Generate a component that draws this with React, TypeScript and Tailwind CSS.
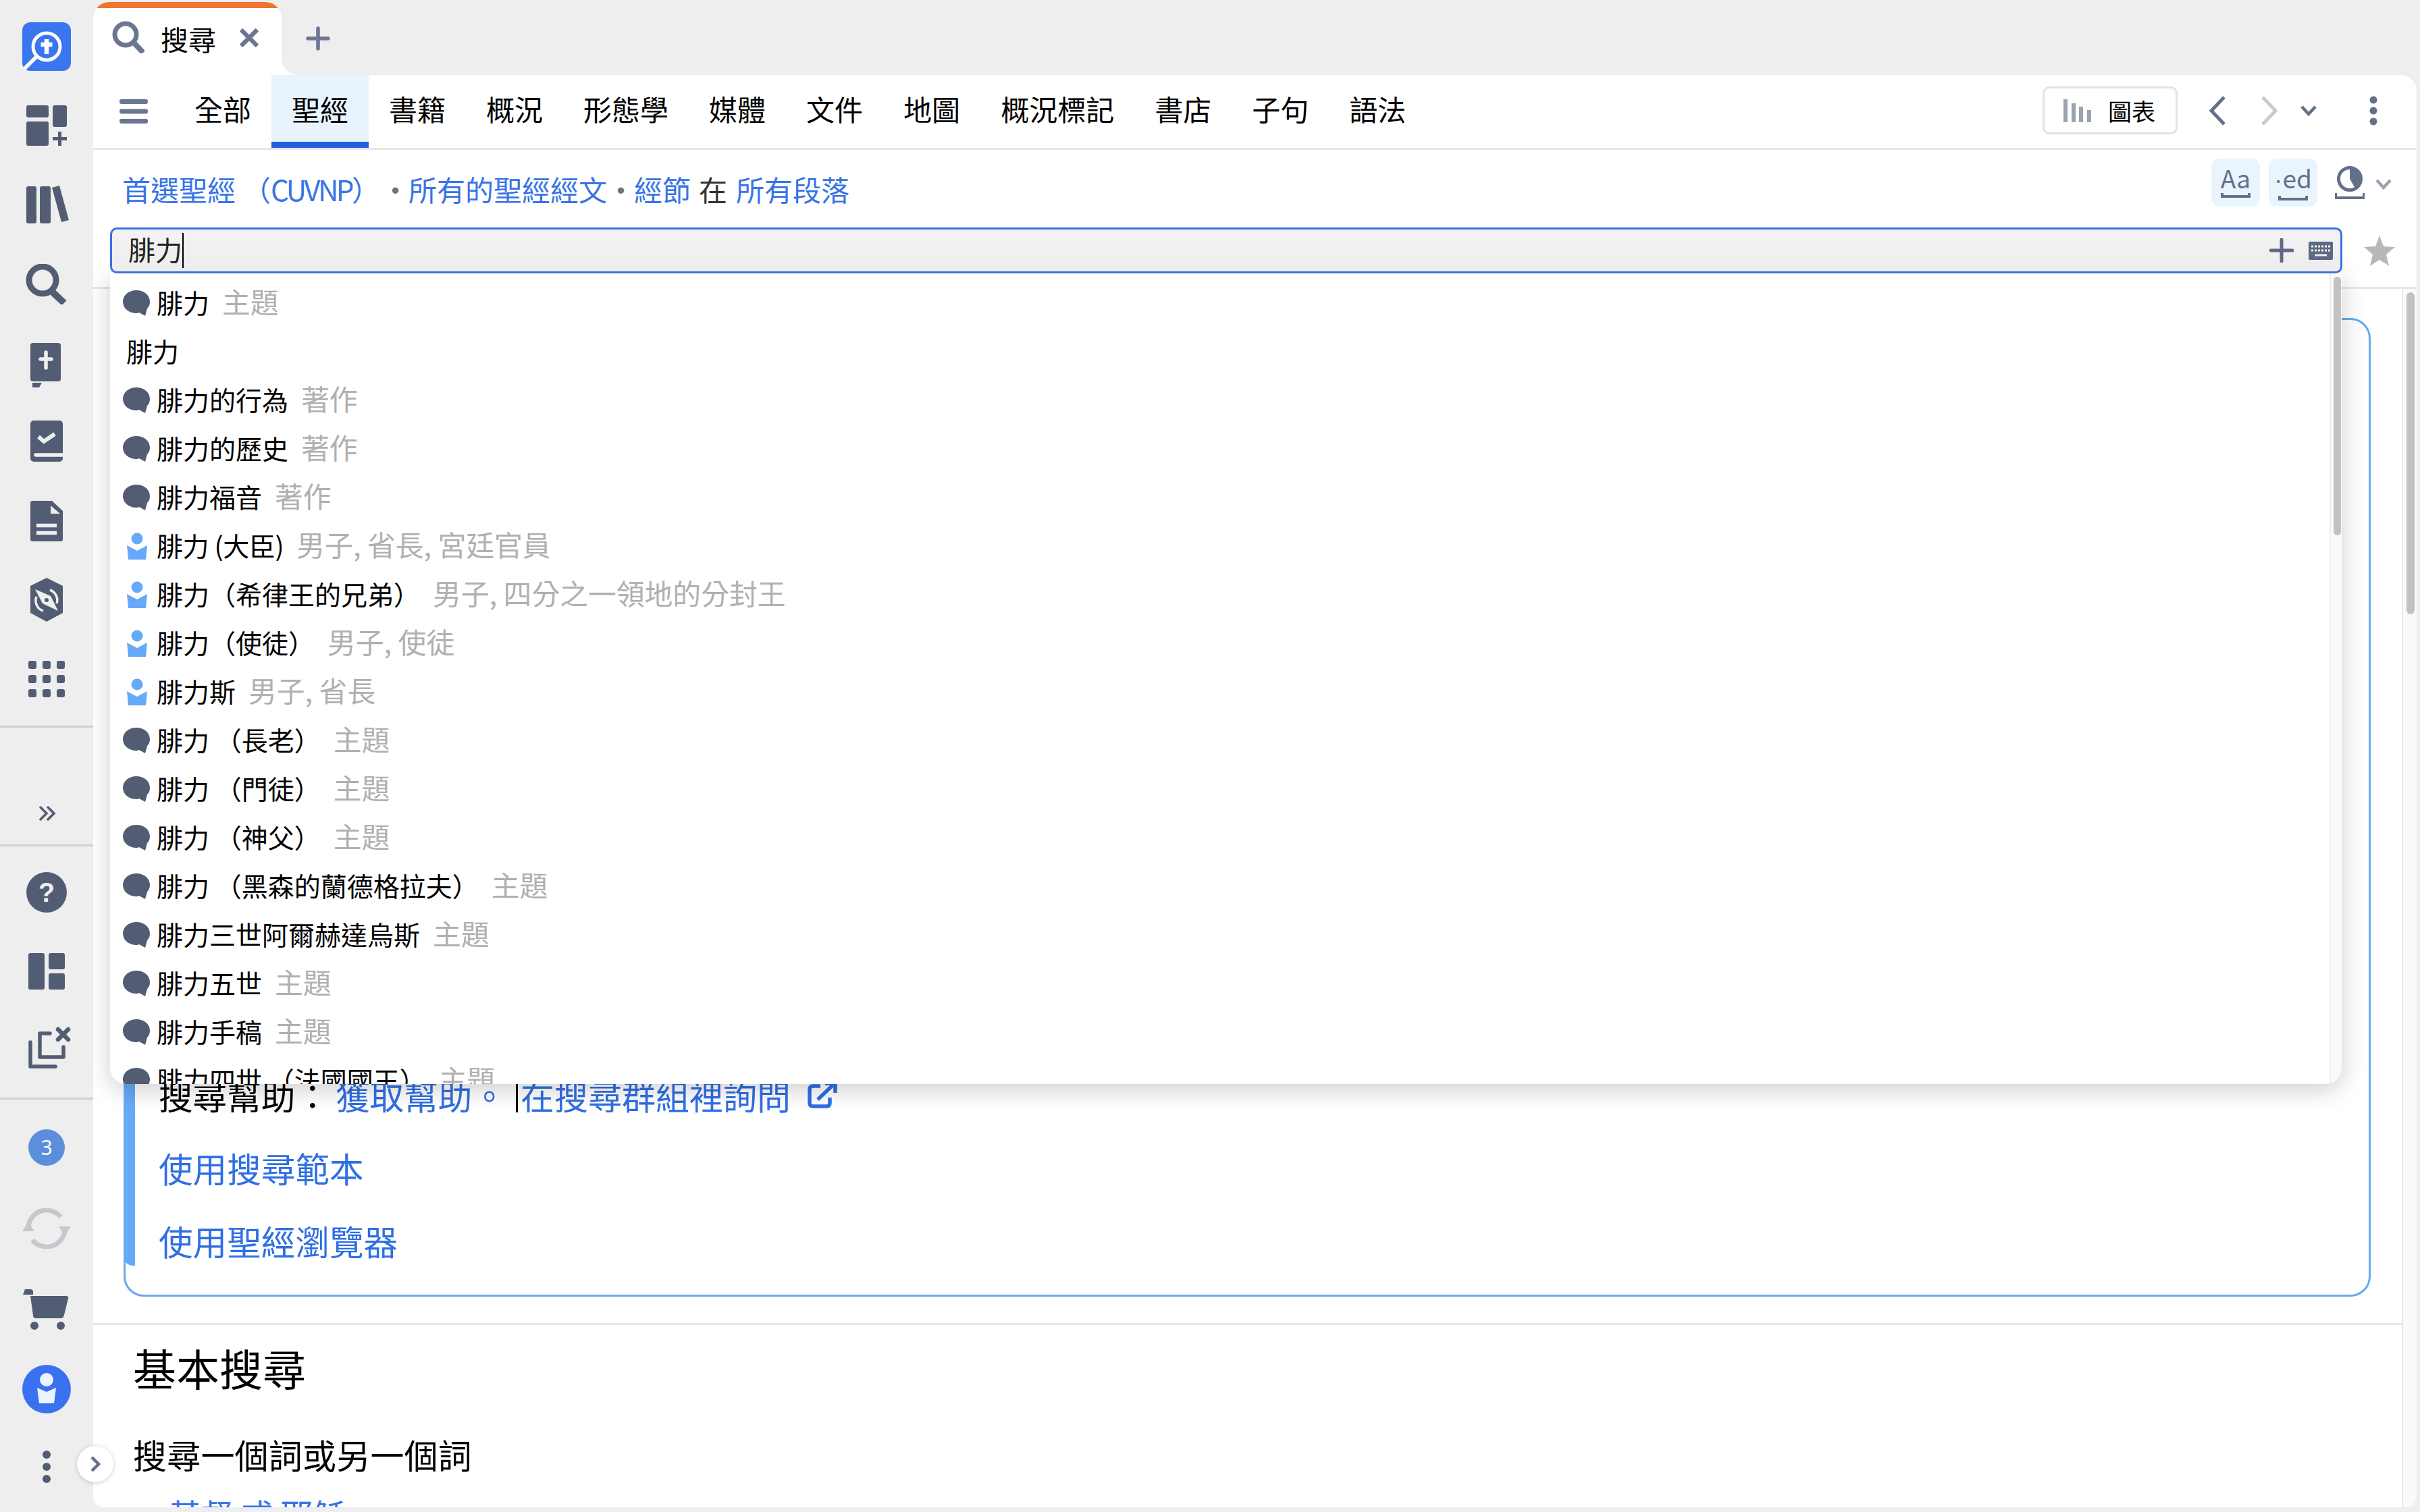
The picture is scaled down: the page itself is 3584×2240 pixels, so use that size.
import React from "react";

const DARK = "#525d73";
const BG = "#eeeeee";

function Bubble() {
  return (
    <svg width="40" height="38" viewBox="0 0 40 38" className="shrink-0">
      <path d="M20 0C31 0 40 7 40 17C40 22 38 25 36 27L33 38L24 33C22 34 21 34 20 34C9 34 0 27 0 17C0 7 9 0 20 0Z" fill={DARK} />
    </svg>
  );
}

function Person() {
  return (
    <svg width="40" height="40" viewBox="0 0 40 40" className="shrink-0">
      <circle cx="21" cy="9" r="8.5" fill="#66a9f8" />
      <path d="M6 19L21 27L36 19L34 40H8Z" fill="#66a9f8" />
    </svg>
  );
}

const rows: [string, string, string][] = [
  ["b", "腓力", "主題"],
  ["n", "腓力", ""],
  ["b", "腓力的行為", "著作"],
  ["b", "腓力的歷史", "著作"],
  ["b", "腓力福音", "著作"],
  ["p", "腓力 (大臣)", "男子, 省長, 宮廷官員"],
  ["p", "腓力（希律王的兄弟）", "男子, 四分之一領地的分封王"],
  ["p", "腓力（使徒）", "男子, 使徒"],
  ["p", "腓力斯", "男子, 省長"],
  ["b", "腓力 （長老）", "主題"],
  ["b", "腓力 （門徒）", "主題"],
  ["b", "腓力 （神父）", "主題"],
  ["b", "腓力 （黑森的蘭德格拉夫）", "主題"],
  ["b", "腓力三世阿爾赫達烏斯", "主題"],
  ["b", "腓力五世", "主題"],
  ["b", "腓力手稿", "主題"],
  ["b", "腓力四世 （法國國王）", "主題"],
];

const tabs = ["全部", "聖經", "書籍", "概況", "形態學", "媒體", "文件", "地圖", "概況標記", "書店", "子句", "語法"];

function Rail() {
  return (
    <aside className="w-[138px] shrink-0 flex flex-col items-stretch">
      <svg width="72" height="72" viewBox="0 0 72 72" className="mt-[33px] ml-[33px]">
        <rect width="72" height="72" rx="12" fill="#3b75f0" />
        <circle cx="36" cy="36" r="20" fill="none" stroke="#fff" strokeWidth="5" />
        <path d="M22 50L3 69" stroke="#fff" strokeWidth="5.5" />
        <path d="M36 25V47M27.5 33H44.5" stroke="#fff" strokeWidth="6.5" />
      </svg>
      <svg width="72" height="60" viewBox="0 0 72 60" className="mt-[51px] ml-[33px]" fill={DARK}>
        <rect x="6" y="0" width="33" height="18" rx="3" />
        <rect x="6" y="24" width="33" height="36" rx="3" />
        <rect x="45" y="0" width="21" height="32" rx="3" />
        <path d="M55.5 39V60M45 49.5H66" stroke={DARK} strokeWidth="5" />
      </svg>
      <svg width="72" height="56" viewBox="0 0 72 56" className="mt-[59px] ml-[33px]" fill={DARK}>
        <rect x="6" y="1" width="15" height="55" rx="3" />
        <rect x="26" y="1" width="16" height="55" rx="3" />
        <path d="M44 3L55 0L69 51L58 54Z" />
      </svg>
      <svg width="72" height="60" viewBox="0 0 72 60" className="mt-[60px] ml-[33px]" fill="none" stroke={DARK}>
        <circle cx="30" cy="24" r="20" strokeWidth="9" />
        <path d="M43 40L62 58" strokeWidth="10" />
      </svg>
      <svg width="72" height="66" viewBox="0 0 72 66" className="mt-[57px] ml-[33px]">
        <rect x="12" y="0" width="45" height="57" rx="4" fill={DARK} />
        <path d="M15 59H29L25 66H15Z" fill={DARK} />
        <path d="M35 14V37M27 24H43" stroke={BG} strokeWidth="5.5" strokeLinecap="round" />
      </svg>
      <svg width="72" height="61" viewBox="0 0 72 61" className="mt-[49px] ml-[33px]">
        <rect x="12" y="0" width="48" height="61" rx="5" fill={DARK} />
        <path d="M24 24L32 31L48 20" fill="none" stroke={BG} strokeWidth="6" />
        <path d="M20 51H60" stroke={BG} strokeWidth="5.5" strokeLinecap="round" />
      </svg>
      <svg width="72" height="60" viewBox="0 0 72 60" className="mt-[58px] ml-[33px]">
        <path d="M14 0H44L60 15V57Q60 60 57 60H15Q12 60 12 57V2Z" fill={DARK} />
        <path d="M42 7V19H56Z" fill={BG} />
        <path d="M21 36.5H51M21 47.5H51" stroke={BG} strokeWidth="5.5" />
      </svg>
      <svg width="72" height="65" viewBox="0 0 72 65" className="mt-[54px] ml-[33px]">
        <path d="M36 0L60 12V52L36 65L12 52V12Z" fill={DARK} strokeLinejoin="round" />
        <path d="M19 17L42 27L53 49L30 38Z" fill={BG} />
        <path d="M41 18A16 16 0 0 1 51 38M31 49A16 16 0 0 1 21 28" fill="none" stroke={BG} strokeWidth="3.5" />
        <circle cx="36" cy="33" r="3" fill={DARK} />
      </svg>
      <svg width="72" height="54" viewBox="0 0 72 54" className="mt-[58px] ml-[33px]" fill={DARK}>
        <rect x="9" y="0" width="12" height="12" rx="3" />
        <rect x="30" y="0" width="12" height="12" rx="3" />
        <rect x="51" y="0" width="12" height="12" rx="3" />
        <rect x="9" y="21" width="12" height="12" rx="3" />
        <rect x="30" y="21" width="12" height="12" rx="3" />
        <rect x="51" y="21" width="12" height="12" rx="3" />
        <rect x="9" y="42" width="12" height="12" rx="3" />
        <rect x="30" y="42" width="12" height="12" rx="3" />
        <rect x="51" y="42" width="12" height="12" rx="3" />
      </svg>
      <div className="mt-[42px] h-[3px] bg-[#cfcfcf]" />
      <svg width="72" height="22" viewBox="0 0 72 22" className="mt-[116px] ml-[33px]" fill="none" stroke={DARK} strokeWidth="3.5" strokeLinecap="round">
        <path d="M27 2L36 11L27 20M38 2L47 11L38 20" />
      </svg>
      <div className="mt-[35px] h-[3px] bg-[#cfcfcf]" />
      <div className="mt-[38px] ml-[39px] w-[60px] h-[60px] rounded-full bg-[#525d73] text-[#eeeeee] text-[40px] font-bold leading-[60px] text-center font-['Liberation_Sans',sans-serif]">?</div>
      <svg width="72" height="54" viewBox="0 0 72 54" className="mt-[60px] ml-[33px]" fill={DARK}>
        <rect x="9" y="0" width="24" height="54" rx="3" />
        <rect x="39" y="0" width="24" height="24" rx="3" />
        <rect x="39" y="30" width="24" height="24" rx="3" />
      </svg>
      <svg width="72" height="62" viewBox="0 0 72 62" className="mt-[55px] ml-[33px]" fill="none" stroke={DARK} strokeLinecap="round" strokeLinejoin="round">
        <path d="M41 10H26V45H61V30" strokeWidth="5.5" />
        <path d="M12 23V59H49" strokeWidth="5.5" />
        <path d="M53 4L68 19M68 4L53 19" strokeWidth="6.5" />
      </svg>
      <div className="mt-[43px] h-[3px] bg-[#cfcfcf]" />
      <div className="mt-[44px] ml-[42px] w-[54px] h-[54px] rounded-full bg-[#5b8fdc] text-white text-[30px] leading-[54px] text-center font-['Noto_Sans',sans-serif]">3</div>
      <svg width="72" height="60" viewBox="0 0 72 60" className="mt-[63px] ml-[33px]" fill="none">
        <path d="M9 32A27 27 0 0 1 57 13M63 28A27 27 0 0 1 15 47" stroke="#c5c8cd" strokeWidth="7" />
        <path d="M0 34L9 20L18 34Z M54 27L72 27L63 41Z" fill="#c5c8cd" />
      </svg>
      <svg width="72" height="60" viewBox="0 0 72 60" className="mt-[60px] ml-[33px]" fill={DARK}>
        <path d="M3 0H11Q15 0 15 4V8H-0Z" transform="translate(1 0)" />
        <path d="M12 10H65Q69 10 68 14L62 38Q61 43 57 43H20Q16 43 16 39Z" />
        <circle cx="18" cy="54" r="6" />
        <circle cx="57" cy="54" r="6" />
      </svg>
      <svg width="72" height="72" viewBox="0 0 72 72" className="mt-[52px] ml-[33px]">
        <circle cx="36" cy="36" r="36" fill="#3a71f0" />
        <circle cx="36" cy="22" r="10" fill="#eaf4fd" />
        <path d="M22 34L36 40L50 34L47 57H25Z" fill="#eaf4fd" />
      </svg>
      <svg width="72" height="48" viewBox="0 0 72 48" className="mt-[55px] ml-[33px]" fill={DARK}>
        <circle cx="36" cy="6" r="6" />
        <circle cx="36" cy="24" r="6" />
        <circle cx="36" cy="42" r="6" />
      </svg>
    </aside>
  );
}

function Bracket() {
  return <path d="M2 0V5H42V0" fill="none" stroke="#64708a" strokeWidth="4" />;
}

function SearchDropdown() {
  return (
    <div className="absolute z-10 left-0 right-[1px] top-[66px] h-[1203px] bg-white rounded-b-[24px] shadow-[0_8px_36px_rgba(0,0,0,0.2)] overflow-hidden flex">
      <div className="flex-1 pt-[10px] overflow-hidden">
        {rows.map(([kind, main, sub], i) => (
          <div key={i} className="h-[72px] flex items-center text-[39px] text-black leading-none whitespace-nowrap">
            {kind === "n" && <span className="ml-[24px] mb-[4px]">{main}</span>}
            {kind === "b" && (
              <span className="ml-[19px] mr-[10px] flex"><Bubble /></span>
            )}
            {kind === "p" && (
              <span className="ml-[19px] mr-[10px] flex"><Person /></span>
            )}
            {kind !== "n" && (
              <span className={main.includes("(") ? "mb-[4px] tracking-[-0.4px]" : "mb-[4px]"}>{main}</span>
            )}
            {sub && <span className="ml-[19px] mb-[4px] text-[41.8px] text-[#b0b0b0]">{sub}</span>}
          </div>
        ))}
      </div>
      <div className="w-[18px] bg-[#fafafa] border-l-2 border-[#eeeeee] pl-[4px] pt-[7px]">
        <div className="w-[11px] h-[383px] rounded-full bg-[#c2c2c2]" />
      </div>
    </div>
  );
}

function Dot() {
  return <span className="w-[13px] flex justify-center text-[#6b7280] text-[44px]">•</span>;
}

export default function App() {
  return (
    <div className="w-[3584px] h-[2240px] flex overflow-hidden bg-[#eeeeee] font-['Noto_Sans_CJK_TC','Noto_Sans',sans-serif] relative">
      <Rail />
      <main className="flex-1 min-w-0 flex flex-col pr-[5px] pb-[7px]">
        <div className="h-[111px] shrink-0 flex pt-[3px]">
          <div className="w-[279px] shrink-0 bg-white rounded-t-[24px] overflow-hidden">
            <div className="h-[9px] bg-[#ee7430]" />
            <div className="flex items-center pl-[28px] h-[90px]">
              <svg width="48" height="48" viewBox="0 0 48 48" fill="none" stroke="#6b7690" className="mb-[4px]">
                <circle cx="20" cy="20" r="16" strokeWidth="7" />
                <path d="M31 31L46 47" strokeWidth="8" />
              </svg>
              <span className="ml-[24px] text-[41px] leading-none text-black">搜尋</span>
              <svg width="28" height="28" viewBox="0 0 28 28" className="ml-[35px] mb-[2px]" stroke="#6b7690" strokeWidth="6.5">
                <path d="M2 2L26 26M26 2L2 26" />
              </svg>
            </div>
          </div>
          <div className="flex-1 bg-white">
            <div className="h-full bg-[#eeeeee] rounded-bl-[24px] pl-[36px] pt-[36px]">
              <svg width="36" height="36" viewBox="0 0 36 36" stroke="#6b7690" strokeWidth="5.5" strokeLinecap="round">
                <path d="M18 3V33M3 18H33" />
              </svg>
            </div>
          </div>
        </div>

        <div className="flex-1 min-h-0 bg-white rounded-tr-[24px] rounded-b-[16px] overflow-hidden flex flex-col">
          <div className="h-[111px] shrink-0 border-b-[3px] border-[#e6e6e6] flex pl-[39px]">
            <svg width="42" height="36" viewBox="0 0 42 36" className="mt-[36px]" fill="#6b7690">
              <rect width="42" height="7" rx="3" />
              <rect y="14.5" width="42" height="7" rx="3" />
              <rect y="29" width="42" height="7" rx="3" />
            </svg>
            <div className="flex ml-[39px]">
              {tabs.map((t) => (
                <div
                  key={t}
                  className={
                    t === "聖經"
                      ? "px-[30px] text-[42px] text-black leading-[100px] bg-[#e8f3fd] border-b-[9px] border-[#2360dc] h-[108px] whitespace-nowrap"
                      : "px-[30px] text-[42px] text-black leading-[100px] h-[108px] whitespace-nowrap"
                  }
                >
                  {t}
                </div>
              ))}
            </div>
            <div className="ml-auto flex items-center pr-[58px] pb-[3px]">
              <div className="w-[200px] h-[71px] border-[3px] border-[#e2e2e2] rounded-[10px] flex items-center pl-[28px]">
                <svg width="42" height="34" viewBox="0 0 42 34" fill="#9aa3b2">
                  <rect x="0" y="0" width="6" height="34" />
                  <rect x="12" y="6" width="6" height="28" />
                  <rect x="23" y="11" width="6" height="23" />
                  <rect x="35" y="16" width="6" height="18" />
                </svg>
                <span className="ml-[24px] text-[35px] leading-none text-black">圖表</span>
              </div>
              <svg width="24" height="44" viewBox="0 0 24 44" className="ml-[47px]" fill="none" stroke="#64708a" strokeWidth="5">
                <path d="M22 2L3 22L22 42" />
              </svg>
              <svg width="24" height="44" viewBox="0 0 24 44" className="ml-[53px]" fill="none" stroke="#c8cbd2" strokeWidth="5">
                <path d="M2 2L21 22L2 42" />
              </svg>
              <svg width="24" height="16" viewBox="0 0 24 16" className="ml-[34px]" fill="none" stroke="#64708a" strokeWidth="4.5">
                <path d="M2 2L12 13L22 2" />
              </svg>
              <svg width="12" height="44" viewBox="0 0 12 44" className="ml-[78px]" fill="#64708a">
                <circle cx="6" cy="6" r="5.5" />
                <circle cx="6" cy="22" r="5.5" />
                <circle cx="6" cy="38" r="5.5" />
              </svg>
            </div>
          </div>

          <div className="h-[206px] shrink-0 border-b-[3px] border-[#e6e6e6] pl-[25px] pr-[37px]">
            <div className="h-[115px] flex">
              <div className="mt-[30px] h-[56px] text-[42px] leading-[56px] text-[#3874e6] whitespace-nowrap pl-[18px] flex items-center">
                <span>首選聖經</span>
                <span className="ml-[10px]">（<span className="tracking-[-3.5px]">CUVNP</span>）</span>
                <span className="ml-[16px] mr-[13px] flex"><Dot /></span>
                <span>所有的聖經經文</span>
                <span className="ml-[14px] mr-[13px] flex"><Dot /></span>
                <span>經節</span>
                <span className="ml-[12px] mr-[13px] text-[#333333]">在</span>
                <span>所有段落</span>
              </div>
              <div className="ml-auto flex items-start pt-[13px]">
                <div className="w-[72px] h-[71px] rounded-[12px] bg-[#eaf4fd] flex flex-col items-center pt-[6px]">
                  <span className="text-[37px] leading-[44px] text-[#64708a]">Aa</span>
                  <svg width="44" height="8" viewBox="0 0 44 8" className="mt-[1px]"><Bracket /></svg>
                </div>
                <div className="ml-[13px] w-[72px] h-[71px] rounded-[12px] bg-[#eaf4fd] flex flex-col items-center pt-[6px]">
                  <span className="text-[37px] leading-[44px] text-[#64708a]"><span className="font-['Liberation_Sans',sans-serif]">·</span>ed</span>
                  <svg width="44" height="8" viewBox="0 0 44 8" className="mt-[1px]"><Bracket /></svg>
                </div>
                <svg width="44" height="60" viewBox="0 0 44 60" className="ml-[26px] mt-[11px]" fill="none">
                  <circle cx="22" cy="19" r="16.5" stroke="#64708a" strokeWidth="5" />
                  <path d="M22 19V3A16 16 0 0 1 30 33Z" fill="#64708a" />
                  <path d="M1 44V51H43V44" stroke="#64708a" strokeWidth="4" transform="translate(0 -4)" />
                </svg>
                <svg width="24" height="16" viewBox="0 0 24 16" className="ml-[16px] mt-[30px]" fill="none" stroke="#9aa3b2" strokeWidth="4.5">
                  <path d="M2 2L12 13L22 2" />
                </svg>
              </div>
            </div>
            <div className="flex items-start">
              <div className="relative w-[3306px] shrink-0">
                <div className="relative z-20 h-[68px] border-[3px] border-[#3a70e0] rounded-[10px] bg-gradient-to-b from-[#f3f3f3] to-[#ededed] flex items-center pl-[24px] pr-[11px]">
                  <span className="text-[40px] text-[#222222] leading-none mb-[4px]">腓力</span>
                  <span className="w-[2px] h-[52px] bg-black" />
                  <svg width="36" height="36" viewBox="0 0 36 36" className="ml-auto" stroke="#5e6a85" strokeWidth="5" strokeLinecap="round">
                    <path d="M18 2V34M2 18H34" />
                  </svg>
                  <svg width="36" height="27" viewBox="0 0 36 27" className="ml-[22px]">
                    <rect width="36" height="27" rx="2" fill="#5e6a85" />
                    <path d="M4 7H32M4 13H32" stroke="#f2f2f2" strokeWidth="3" strokeDasharray="3 2" />
                    <path d="M9 20H27" stroke="#f2f2f2" strokeWidth="3" />
                  </svg>
                </div>
                <SearchDropdown />
              </div>
              <svg width="48" height="45" viewBox="0 0 48 45" className="ml-[31px] mt-[12px] shrink-0" fill="#b8b8b8">
                <path d="M24 0L30 16L47 17L34 28L38 45L24 36L10 45L14 28L1 17L18 16Z" />
              </svg>
            </div>
          </div>

          <div className="flex-1 min-h-0 flex overflow-hidden">
            <div className="flex-1 min-w-0 overflow-hidden">
              <div className="mt-[43px] ml-[45px] mr-[46px] h-[1450px] border-[3px] border-[#6aa9ea] rounded-[30px] flex flex-col justify-end pb-[43px]">
                <div className="border-l-[17px] border-[#66a9f5] rounded-bl-[14px] pl-[35px] pt-[60px] pb-[2px] flex flex-col gap-[38px] text-[50.6px] leading-[70px] text-[#2f6fe4] -ml-[3px]">
                  <div className="flex items-center whitespace-nowrap">
                    <span className="text-black">搜尋幫助：</span>
                    <span className="ml-[9px]">獲取幫助。</span>
                    <span className="ml-[14px] w-[3px] h-[52px] bg-black mr-[4px]" />
                    <span className="text-[50px]">在搜尋群組裡詢問</span>
                    <svg width="44" height="40" viewBox="0 0 44 40" className="ml-[25px]" fill="none" stroke="#2f6fe4" strokeWidth="5.5">
                      <path d="M19 7H8Q3 7 3 12V32Q3 37 8 37H28Q33 37 33 32V24" />
                      <path d="M15 27L37 6M26 3H41V17" />
                    </svg>
                  </div>
                  <div>使用搜尋範本</div>
                  <div>使用聖經瀏覽器</div>
                </div>
              </div>
              <div className="mt-[39px] border-t-[3px] border-[#e8e8e8] pl-[59px]">
                <div className="mt-[22px] text-[64px] leading-[80px] text-black">基本搜尋</div>
                <div className="mt-[54px] text-[50px] leading-[70px] text-black tracking-[0.2px]">搜尋一個詞或另一個詞</div>
                <div className="mt-[18px] ml-[53px] text-[48px] leading-[70px] text-[#3874e6] whitespace-nowrap">基督 或 耶穌</div>
              </div>
            </div>
            <div className="w-[22px] shrink-0 bg-[#fafafa] border-l-2 border-[#e8e8e8] pl-[5px] pt-[5px]">
              <div className="w-[12px] h-[477px] rounded-full bg-[#c2c2c2]" />
            </div>
          </div>
        </div>
      </main>
      <div className="absolute left-[114px] top-[2142px] w-[54px] h-[54px] rounded-full bg-white shadow-[0_1px_6px_rgba(0,0,0,0.2)] flex items-center justify-center">
        <svg width="16" height="26" viewBox="0 0 16 26" fill="none" stroke="#64708a" strokeWidth="4.5">
          <path d="M3 3L13 13L3 23" />
        </svg>
      </div>
    </div>
  );
}
